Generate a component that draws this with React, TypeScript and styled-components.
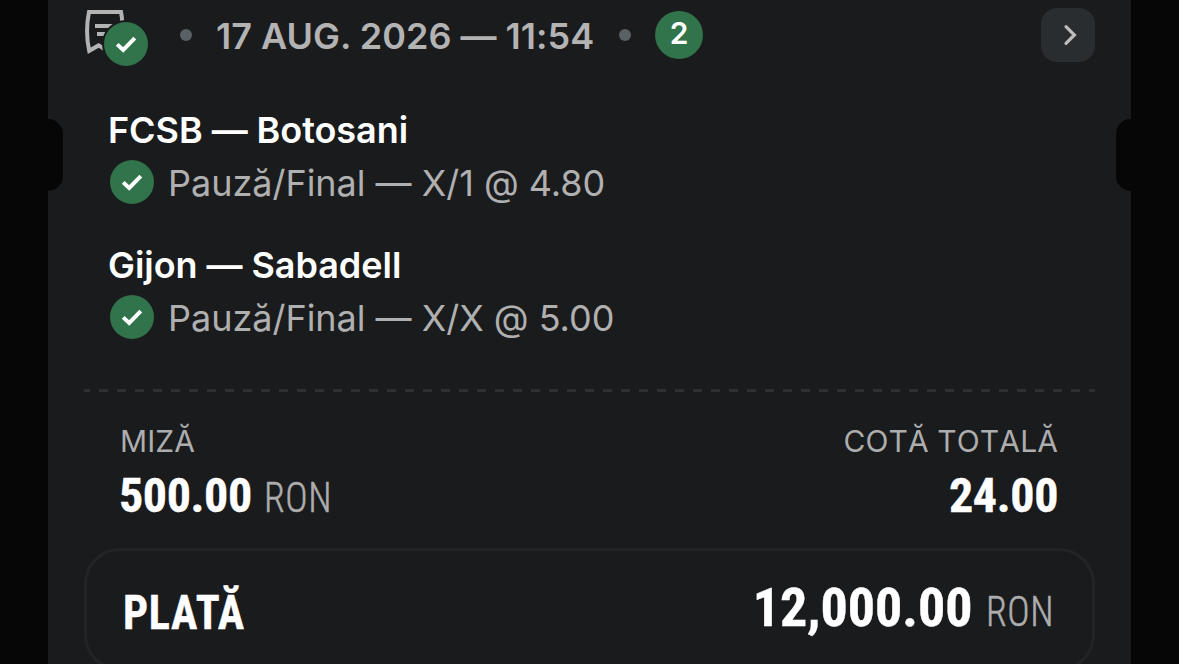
import React from 'react';
import styled, { createGlobalStyle } from 'styled-components';

const bets = [
  { id: 1, match: 'FCSB — Botosani', pick: 'Pauză/Final — X/1 @ 4.80' },
  { id: 2, match: 'Gijon — Sabadell', pick: 'Pauză/Final — X/X @ 5.00' },
];

const CheckIcon = () => (
  <svg width="44" height="44" viewBox="0 0 44 44" fill="none">
    <circle cx="22" cy="22" r="22" fill="#31734a" />
    <path d="M13.2 22.4L19.2 28L30.8 16.2" stroke="#ffffff" strokeWidth="4" />
  </svg>
);

const TicketIcon = () => (
  <svg width="42" height="48" viewBox="0 0 42 48" fill="none" stroke="#b3b3b3" strokeWidth="4">
    <path d="M38.2 13C38 9.4 37.6 7 37 4H5C2.4 16.6 2.4 30 5.2 42.8L14.6 37.4L22 42" />
    <path d="M11 18H29M13 26H24" />
  </svg>
);

const TicketPage = () => {
  return (
    <PageWrapper>
      <GlobalStyle />
      <Ticket>
        <Notch $side="left" />
        <Notch $side="right" />
        <Header>
          <Status>
            <TicketIcon />
            <StatusBadge><CheckIcon /></StatusBadge>
          </Status>
          <Dot />
          <DateText>17 AUG. 2026 — 11:54</DateText>
          <Dot />
          <Count>2</Count>
          <OpenButton>
            <svg width="14" height="22" viewBox="0 0 14 22" fill="none">
              <path d="M3 2.6L11.4 11L3 19.4" stroke="#bdbdbd" strokeWidth="3.2" strokeLinecap="round" />
            </svg>
          </OpenButton>
        </Header>
        <BetList>
          {bets.map((bet) => (
            <Bet key={bet.id}>
              <Match>{bet.match}</Match>
              <Pick><CheckIcon /><span>{bet.pick}</span></Pick>
            </Bet>
          ))}
        </BetList>
        <Divider />
        <Summary>
          <Column $align="left">
            <Label>MIZĂ</Label>
            <Amount>500.00 <Currency>RON</Currency></Amount>
          </Column>
          <Column $align="right">
            <Label>COTĂ TOTALĂ</Label>
            <Amount>24.00</Amount>
          </Column>
        </Summary>
        <Payout>
          <PayoutTitle>PLATĂ</PayoutTitle>
          <PayoutAmount>12,000.00 <Currency>RON</Currency></PayoutAmount>
        </Payout>
      </Ticket>
    </PageWrapper>
  );
};

const GlobalStyle = createGlobalStyle`
  * {
    box-sizing: border-box;
  }
  body {
    margin: 0;
    background-color: #060606;
    font-family: 'Inter', sans-serif;
    font-feature-settings: 'calt' 0;
  }
`;

const PageWrapper = styled.div`
  width: 1179px;
  height: 664px;
  overflow: hidden;
  padding: 0 48px;
  background-color: #060606;
`;

const Ticket = styled.div`
  position: relative;
  height: 700px;
  padding: 8px 36px 0;
  background-color: #1a1b1d;
`;

const Notch = styled.div<{ $side: 'left' | 'right' }>`
  position: absolute;
  top: 119px;
  ${(props) => props.$side}: 0;
  width: 15px;
  height: 72px;
  background-color: #060606;
  border-radius: ${(props) => (props.$side === 'left' ? '0 15px 15px 0' : '15px 0 0 15px')};
`;

const Header = styled.div`
  height: 54px;
  display: flex;
  align-items: center;
`;

const Status = styled.div`
  position: relative;
  width: 64px;
  height: 54px;
  margin-right: 32px;
`;

const StatusBadge = styled.div`
  position: absolute;
  top: 12px;
  left: 18px;
  width: 48px;
  height: 48px;
  padding: 2px;
  background-color: #1a1b1d;
  border-radius: 50%;
`;

const Dot = styled.div`
  width: 12px;
  height: 12px;
  background-color: #5a6165;
  border-radius: 50%;
`;

const DateText = styled.div`
  width: 378px;
  margin: 0 25px 0 24px;
  line-height: 54px;
  padding-top: 2px;
  font-size: 36px;
  font-weight: 600;
  color: #b3b3b3;
  white-space: nowrap;
`;

const Count = styled.div`
  width: 48px;
  height: 48px;
  margin-left: 24px;
  line-height: 45px;
  font-size: 30px;
  font-weight: 600;
  text-align: center;
  color: #ffffff;
  background-color: #31734a;
  border-radius: 50%;
`;

const OpenButton = styled.div`
  width: 54px;
  height: 54px;
  margin-left: auto;
  padding-left: 4px;
  display: flex;
  align-items: center;
  justify-content: center;
  background-color: #2a2d2f;
  border-radius: 16px;
`;

const BetList = styled.div`
  padding: 41px 0 0 24px;
`;

const Bet = styled.div`
  height: 135px;
`;

const Match = styled.div`
  height: 53px;
  line-height: 54px;
  font-size: 36px;
  font-weight: 600;
  letter-spacing: -0.05px;
  color: #ffffff;
`;

const Pick = styled.div`
  height: 52px;
  display: flex;
  align-items: center;
  gap: 14px;
  padding-left: 2px;
  line-height: 54px;
  font-size: 36px;
  letter-spacing: -0.02px;
  color: #b0b0b0;

  span {
    padding-top: 2px;
  }
`;

const Divider = styled.div`
  height: 3px;
  margin-top: 16px;
  background: repeating-linear-gradient(90deg, #2e2f31 0 6px, transparent 6px 15px, #2e2f31 15px 18px);
`;

const Summary = styled.div`
  display: flex;
  justify-content: space-between;
  padding: 31px 37px 0 35px;
`;

const Column = styled.div<{ $align: string }>`
  text-align: ${(props) => props.$align};
`;

const Label = styled.div`
  height: 36px;
  padding-left: 1px;
  line-height: 36px;
  font-size: 30px;
  font-kerning: none;
  letter-spacing: 0.1px;
  color: #adadad;
`;

const Amount = styled.div`
  height: 72px;
  line-height: 74px;
  font-family: 'Roboto Condensed', 'Roboto', sans-serif;
  font-stretch: 75%;
  font-size: 48px;
  font-weight: 700;
  letter-spacing: -0.4px;
  color: #ffffff;
  white-space: nowrap;
  -webkit-text-stroke: 0.4px #ffffff;
`;

const Currency = styled.span`
  display: inline-block;
  width: 67px;
  margin-left: 1px;
  font-size: 42px;
  font-weight: 300;
  letter-spacing: 0.6px;
  color: #adadad;
  transform: scaleX(0.9);
  transform-origin: left;
  -webkit-text-stroke: 0.5px #adadad;
`;

const Payout = styled.div`
  height: 123px;
  margin-top: 17px;
  padding: 0 39px 0 36px;
  display: flex;
  align-items: center;
  justify-content: space-between;
  border: 3px solid #232426;
  border-radius: 36px;
`;

const PayoutTitle = styled(Amount)`
  line-height: 77px;
  letter-spacing: 0.8px;
  transform: scaleX(0.92);
  transform-origin: left;
`;

const PayoutAmount = styled(Amount)`
  line-height: 67px;
  font-size: 54px;
  letter-spacing: 0;
`;

export default TicketPage;
